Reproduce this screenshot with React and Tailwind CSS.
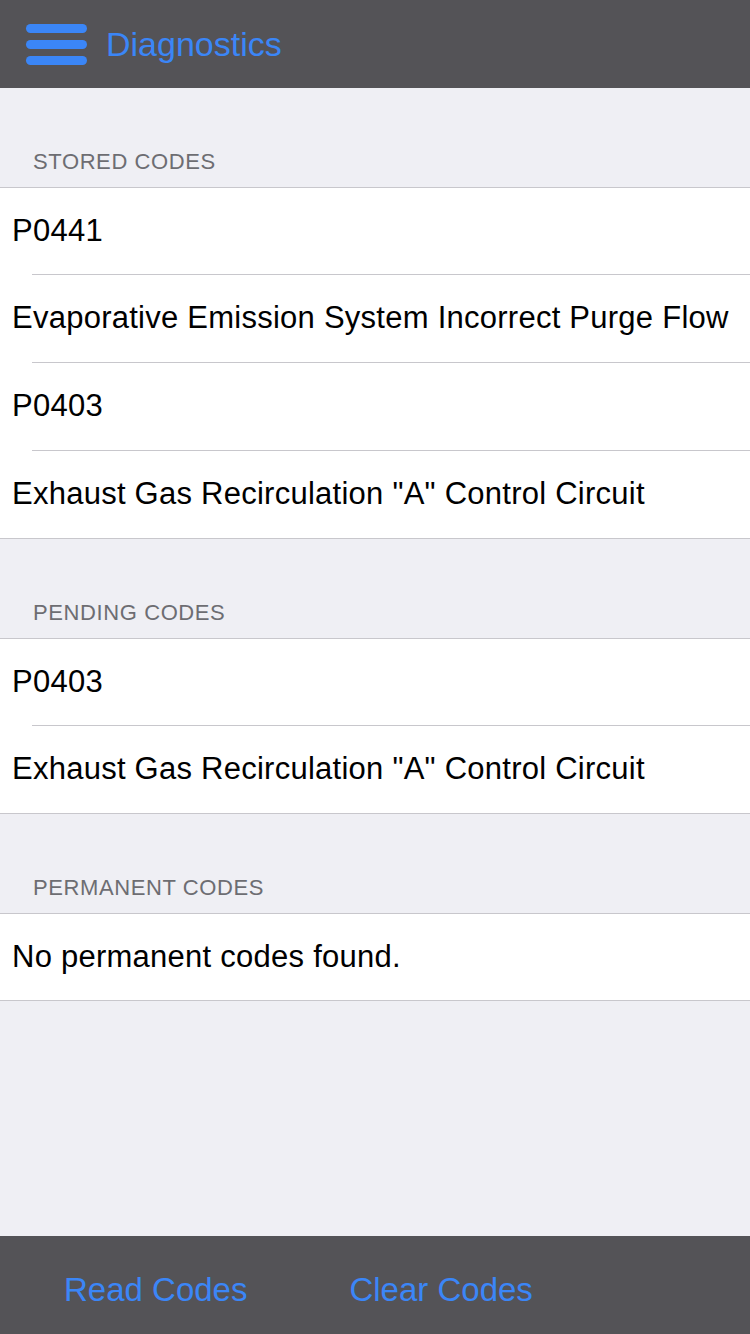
const sections = [
  {
    title: "STORED CODES",
    rows: [
      "P0441",
      "Evaporative Emission System Incorrect Purge Flow",
      "P0403",
      'Exhaust Gas Recirculation "A" Control Circuit',
    ],
  },
  {
    title: "PENDING CODES",
    rows: ["P0403", 'Exhaust Gas Recirculation "A" Control Circuit'],
  },
  {
    title: "PERMANENT CODES",
    rows: ["No permanent codes found."],
  },
];

const Section = ({ title, rows }) => {
  return (
    <section>
      <div className="h-[100px] flex items-end pl-[33px] pb-[9px] text-[22px] text-[#6d6d72] tracking-[0.6px] border-b border-[#c8c7cc]">
        {title}
      </div>
      <div className="bg-white">
        {rows.map((row, i) => {
          const last = i === rows.length - 1;
          return (
            <div
              key={i}
              className={
                (i === 0 ? "h-[87px] " : "h-[88px] ") +
                (last ? "" : "ml-[32px] ") +
                "flex items-center border-b border-[#c8c7cc]"
              }
            >
              <span
                className={
                  last
                    ? "ml-[12px] text-[31px] tracking-[0.25px] text-black"
                    : "-ml-[20px] text-[31px] tracking-[0.25px] text-black"
                }
              >
                {row}
              </span>
            </div>
          );
        })}
      </div>
    </section>
  );
};

export default function App() {
  return (
    <div
      className="w-[750px] h-[1334px] flex flex-col bg-[#efeff4] overflow-hidden"
      style={{ fontFamily: '"Liberation Sans", Arial, sans-serif' }}
    >
      {/* top bar */}
      <header className="h-[88px] shrink-0 bg-[#545357] flex items-center pl-[26px]">
        <div className="flex flex-col gap-[7px] w-[61px]">
          <span className="block h-[9px] rounded-full bg-[#3b86f7]" />
          <span className="block h-[9px] rounded-full bg-[#3b86f7]" />
          <span className="block h-[9px] rounded-full bg-[#3b86f7]" />
        </div>
        <h1 className="ml-[19px] text-[34px] text-[#3b86f7] font-normal">Diagnostics</h1>
      </header>

      <main className="flex-1">
        {sections.map((s) => (
          <Section key={s.title} title={s.title} rows={s.rows} />
        ))}
      </main>

      {/* bottom toolbar */}
      <footer className="h-[98px] shrink-0 bg-[#545357] flex items-center pl-[64px] pt-[10px] gap-[102px] text-[33px] text-[#3b86f7]">
        <button>Read Codes</button>
        <button>Clear Codes</button>
      </footer>
    </div>
  );
}
